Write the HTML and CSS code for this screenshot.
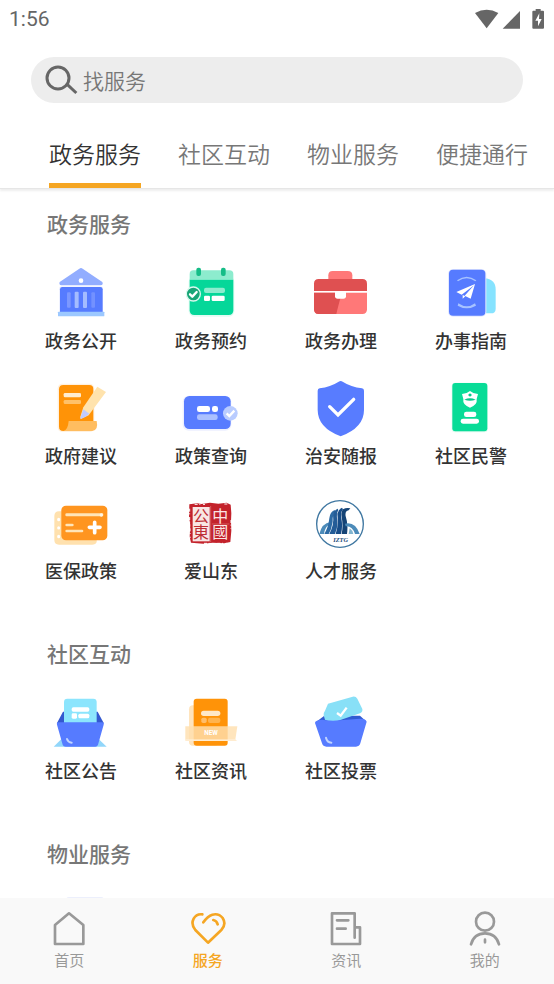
FILE: index.html
```html
<!DOCTYPE html>
<html lang="zh-CN">
<head>
<meta charset="utf-8">
<meta name="viewport" content="width=device-width, initial-scale=1">
<title>政务服务</title>
<link rel="stylesheet" href="styles.css">
</head>
<body>
<div class="app">
  <div class="status">
    <span class="status-time">1:56</span>
    <svg class="status-icons" viewBox="588 18 222 72" aria-hidden="true">
      <path d="M594 36Q629 16 664 36L629 82Z"/>
      <path d="M729 30V83H677Z"/>
      <path fill-rule="evenodd" d="M776 24h15v5h7q3 0 3 3v48q0 3-3 3h-29q-3 0-3-3V32q0-3 3-3h7zM787 37l-12 22h8v17l11-22h-8z"/>
    </svg>
  </div>

  <label class="search">
    <svg class="search-icon" viewBox="132 192 105 96" aria-hidden="true">
      <circle cx="174" cy="234" r="33"/><path d="M199 251L229 279"/>
    </svg>
    <input class="search-input" type="search" placeholder="找服务" aria-label="找服务">
  </label>

  <nav class="tabs">
    <a class="tab tab-active" href="#gov">政务服务</a>
    <a class="tab" href="#community">社区互动</a>
    <a class="tab" href="#property">物业服务</a>
    <a class="tab" href="#access">便捷通行</a>
  </nav>

  <main class="content">
    <section class="group group-first" id="gov">
      <h2 class="group-title">政务服务</h2>
      <div class="grid">
        <a class="item" href="#">
          <svg class="icon" viewBox="27 15 192 192" aria-hidden="true">
            <rect x="57" y="94" width="132" height="86" rx="8" fill="#eef1ff"/>
            <path d="M118 41q5-4 10 0l59 40q4 9-5 10H64q-8-1-5-10z" fill="#92adff"/>
            <circle cx="123" cy="77" r="7" fill="#fff"/>
            <path d="M67 96h114q7 0 7 7v68H60v-68q0-7 7-7z" fill="#567bff"/>
            <rect x="81" y="112" width="11" height="46" rx="3" fill="#7c98ff"/>
            <rect x="104" y="110" width="12" height="49" rx="3" fill="#a4bcff"/>
            <rect x="129" y="110" width="12" height="49" rx="3" fill="#a4bcff"/>
            <rect x="154" y="112" width="11" height="46" rx="3" fill="#7391ff"/>
            <rect x="54" y="170" width="139" height="14" rx="2" fill="#9cc8ff"/>
          </svg>
          <span class="label">政务公开</span>
        </a>
        <a class="item" href="#">
          <svg class="icon" viewBox="417 15 192 192" aria-hidden="true">
            <rect x="446" y="64" width="137" height="121" rx="16" fill="#e2fbf3"/>
            <path d="M449 74V57q0-11 11-11h108q12 0 12 11v17z" fill="#8decce"/>
            <path d="M449 74h131v92q0 14-14 14H463q-14 0-14-14z" fill="#05d799"/>
            <rect x="469" y="38" width="14" height="25" rx="6" fill="#15bd87"/>
            <rect x="543" y="38" width="14" height="25" rx="6" fill="#15bd87"/>
            <rect x="492" y="98" width="63" height="16" rx="6" fill="#8decce"/>
            <rect x="492" y="122" width="18" height="16" rx="4" fill="#fff"/>
            <rect x="515" y="122" width="39" height="16" rx="4" fill="#fff"/>
            <circle cx="460" cy="117" r="21" fill="#19a577" stroke="#dcf9ef" stroke-width="4"/>
            <path d="M450 118l7 7 13-14" fill="none" stroke="#fff" stroke-width="7" stroke-linecap="round" stroke-linejoin="round"/>
          </svg>
          <span class="label">政务预约</span>
        </a>
        <a class="item" href="#">
          <svg class="icon" viewBox="42 15 192 192" aria-hidden="true">
            <path d="M100 74V61q0-13 13-13h45q14 0 14 13v13z" fill="#ff7878"/>
            <path d="M57 108V86q0-14 14-14h131q14 0 14 14v22z" fill="#df5051"/>
            <path d="M57 113h159v50q0 14-14 14H71q-14 0-14-14z" fill="#ff7878"/>
            <path d="M57 113h90l-9 10q-9 32-14 54H71q-14 0-14-14z" fill="#df5051"/>
            <path d="M120 108h33v16q0 7-8 7h-17q-8 0-8-7z" fill="#fff"/>
          </svg>
          <span class="label">政务办理</span>
        </a>
        <a class="item" href="#">
          <svg class="icon" viewBox="432 15 192 192" aria-hidden="true">
            <path d="M568 70q34 2 34 34v57q0 14-14 14h-20z" fill="#86e3ff"/>
            <rect x="459" y="42" width="115" height="143" rx="15" fill="#e4e9ff"/>
            <rect x="462" y="44" width="109" height="138" rx="12" fill="#567bff"/>
            <path d="M486 76q29-22 58 0l-3 3q-26-18-52 0zM490 145q26 18 50 0l3 7q-28 16-55 0z" fill="#a7c3ff"/>
            <path d="M540 87L484 111 500 119 537 91 509 122 527 131ZM503 120v11l8-7z" fill="#fff"/>
          </svg>
          <span class="label">办事指南</span>
        </a>

        <a class="item" href="#">
          <svg class="icon" viewBox="27 15 192 192" aria-hidden="true">
            <rect x="53" y="41" width="110" height="145" rx="14" fill="#fff1df"/>
            <path d="M70 45h78q12 0 12 12v106l-76 20H70q-13 0-13-13V58q0-13 13-13z" fill="#ff9307"/>
            <rect x="71" y="69" width="52" height="13" rx="4" fill="#ffedd0"/>
            <rect x="71" y="90" width="52" height="12" rx="4" fill="#ffc169"/>
            <path d="M172 50l26 16-52 70-24 11-1-7 9-28z" fill="#ffe3ad"/>
            <path d="M130 118l18 13q-7 8-26 16l-1-4z" fill="#c0cbff"/>
            <path d="M86 153h84q6 27-13 30H70q14-3 16-30z" fill="#ffbd60"/>
          </svg>
          <span class="label">政府建议</span>
        </a>
        <a class="item" href="#">
          <svg class="icon" viewBox="417 15 192 192" aria-hidden="true">
            <rect x="428" y="77" width="146" height="105" rx="18" fill="#edf0ff"/>
            <rect x="432" y="78" width="140" height="99" rx="16" fill="#587cff"/>
            <rect x="471" y="108" width="39" height="18" rx="7" fill="#fff"/>
            <rect x="516" y="108" width="18" height="18" rx="7" fill="#fff"/>
            <rect x="471" y="133" width="62" height="17" rx="7" fill="#abc0ff"/>
            <circle cx="571" cy="130" r="22" fill="#b9ccff"/>
            <path d="M560 130l8 8 15-16" fill="none" stroke="#fff" stroke-width="7"/>
          </svg>
          <span class="label">政策查询</span>
        </a>
        <a class="item" href="#">
          <svg class="icon" viewBox="42 15 192 192" aria-hidden="true">
            <path d="M131 35q6-4 12 0 25 16 58 20 6 1 6 7v58q0 53-70 79-69-26-69-79V62q0-6 6-7 32-4 57-20z" fill="#587cff"/>
            <path d="M104 110l25 25 47-47" fill="none" stroke="#fff" stroke-width="10" stroke-linecap="round"/>
          </svg>
          <span class="label">治安随报</span>
        </a>
        <a class="item" href="#">
          <svg class="icon" viewBox="432 15 192 192" aria-hidden="true">
            <rect x="470" y="38" width="108" height="149" rx="10" fill="#dff9ef"/>
            <rect x="472" y="39" width="105" height="145" rx="9" fill="#08dc97"/>
            <path d="M525 63l10 6 14 3-4 15q3 18-20 26-23-8-20-26l-4-15 14-3z" fill="#fff"/>
            <path d="M508 89q17-8 34 0-17 6-34 0z" fill="#08c98b"/>
            <path d="M525 70l6 5-6 5-6-5z" fill="#08c98b"/>
            <rect x="507" y="125" width="37" height="16" rx="7" fill="#fff"/>
            <rect x="497" y="146" width="55" height="15" rx="7" fill="#fff"/>
          </svg>
          <span class="label">社区民警</span>
        </a>

        <a class="item" href="#">
          <svg class="icon" viewBox="27 0 192 192" aria-hidden="true">
            <path d="M57 64h113v92q-3 8-14 8H57q-14 0-14-14V78q0-14 14-14z" fill="#ffe1ae"/>
            <path d="M56 88v1M56 113v1M56 139v1" stroke="#fff" stroke-width="9" stroke-linecap="round"/>
            <rect x="64" y="47" width="138" height="104" rx="14" fill="#ff951f"/>
            <rect x="76" y="70" width="114" height="9" rx="4" fill="#ffe5b8"/>
            <circle cx="184" cy="75" r="5" fill="#fff6e6"/>
            <rect x="76" y="101" width="25" height="8" rx="4" fill="#ffe5b8"/>
            <rect x="76" y="119" width="54" height="8" rx="4" fill="#ffe5b8"/>
            <path d="M164 97v31M148 112h32" stroke="#fff" stroke-width="11" stroke-linecap="round"/>
          </svg>
          <span class="label">医保政策</span>
        </a>
        <a class="item" href="#">
          <svg class="icon" viewBox="417 0 192 192" aria-hidden="true">
            <path d="M448 43l24-3 12 2 26-4 25 3 25-3 12 6 2 26-1 24 1 28-3 34-18 4-35-2-28 3-37-3-4-18 2-35-4-25z" fill="#c3222b"/>
            <path d="M449 56v42M450 115v29M573 90v27M464 43h31M532 160h28M492 160h20M553 42h12" stroke="#fff" stroke-width="3" stroke-dasharray="9 5 3 8"/>
            <rect x="458" y="51" width="51" height="103" fill="#f8e6e4"/>
            <path d="M512 48v109M516 102h52" stroke="#df7776" stroke-width="2"/>
            <text class="seal seal-red" x="483" y="102">公東</text>
            <text class="seal seal-white" x="541" y="102">中國</text>
          </svg>
          <span class="label">爱山东</span>
        </a>
        <a class="item" href="#">
          <svg class="icon" viewBox="42 0 192 192" aria-hidden="true">
            <circle cx="135" cy="102" r="70" fill="#fff" stroke="#3f77a1" stroke-width="4"/>
            <path d="M73 132q8-33 33-36l-4 8q-13 8-15 28z" fill="#4c8bb9"/>
            <path d="M88 132q12-20 15-47 2-20 16-25l2 5q-9 6-8 30-3 22-12 37z" fill="#2d6ba5"/>
            <path d="M103 132q15-28 11-58 3-14 14-18l2 5q-7 9-3 31 1 22-7 40z" fill="#245c97"/>
            <path d="M122 132q9-26 5-61 2-12 14-18l3 5q-9 8-4 33 3 22-2 41z" fill="#184d88"/>
            <path d="M140 132q5-24 0-52-3-15 4-22 10-6 22-3l-5 6q-12 2-9 18 8 22 4 53z" fill="#154476"/>
            <path d="M150 101q31-7 44 31h-14q-8-25-28-23z" fill="#4c8bb9"/>
            <path d="M161 132l3-17q9 6 11 17z" fill="#81b4cf"/>
            <text class="badge-text" x="137" y="157">IZTG</text>
          </svg>
          <span class="label">人才服务</span>
        </a>
      </div>
    </section>

    <section class="group" id="community">
      <h2 class="group-title">社区互动</h2>
      <div class="grid">
        <a class="item" href="#">
          <svg class="icon" viewBox="27 1 192 192" aria-hidden="true">
            <path d="M41 171l24-24h110l25 24z" fill="#91d6fa"/>
            <path d="M51 100l18-34h104l18 34-20 24H72z" fill="#3358cf"/>
            <rect x="72" y="27" width="98" height="96" rx="10" fill="#8ce5fd"/>
            <rect x="95" y="53" width="53" height="13" rx="5" fill="#fff"/>
            <rect x="95" y="71" width="16" height="16" rx="4" fill="#fff"/>
            <rect x="115" y="72" width="33" height="14" rx="5" fill="#fff"/>
            <path d="M56 98h130q7 0 5 7l-17 60q-2 6-8 6H77q-7 0-9-6l-17-60q-2-7 5-7z" fill="#567bff"/>
            <path d="M81 148q3 10 14 11" fill="none" stroke="#c0d4ff" stroke-width="6" stroke-linecap="round"/>
          </svg>
          <span class="label">社区公告</span>
        </a>
        <a class="item" href="#">
          <svg class="icon" viewBox="417 1 192 192" aria-hidden="true">
            <rect x="447" y="47" width="90" height="121" rx="12" fill="#ffe4bd"/>
            <rect x="461" y="27" width="102" height="141" rx="9" fill="#ff9308"/>
            <rect x="483" y="63" width="58" height="16" rx="8" fill="#ffe8c8"/>
            <rect x="484" y="84" width="16" height="16" rx="5" fill="#ffbd69"/>
            <rect x="504" y="84" width="37" height="16" rx="6" fill="#ffb34e"/>
            <path d="M436 110h156l-6 40H436z" fill="#ffdfae" opacity=".82"/>
            <path d="M436 149h150l5 5H436z" fill="#ffecd0"/>
            <text class="new-text" x="513" y="137">NEW</text>
          </svg>
          <span class="label">社区资讯</span>
        </a>
        <a class="item" href="#">
          <svg class="icon" viewBox="42 1 192 192" aria-hidden="true">
            <path d="M64 96l24-18h107l18 17-20 18H82z" fill="#315bd2"/>
            <path d="M99 42l74-21q9-2 14 6l15 31q2 8-7 13L112 99l-22-9-4-13q-2-6 4-14z" fill="#88e0f7"/>
            <path d="M126 70l11 8 18-24" fill="none" stroke="#fff" stroke-width="7"/>
            <path d="M66 93q12-5 27-1l21 1 81-6q17-1 20 9l-19 65q-3 10-13 10H94q-10 0-13-10L60 100q-1-5 6-7z" fill="#567bff"/>
            <path d="M93 144q3 14 16 15" fill="none" stroke="#c0d4ff" stroke-width="6" stroke-linecap="round"/>
          </svg>
          <span class="label">社区投票</span>
        </a>
      </div>
    </section>

    <section class="group" id="property">
      <h2 class="group-title">物业服务</h2>
      <div class="grid">
        <div class="item">
          <svg class="icon" viewBox="0 0 64 64" aria-hidden="true"><rect x="17" y="7" width="38" height="50" rx="3" fill="#eceffc"/></svg>
        </div>
      </div>
    </section>
  </main>

  <nav class="bottom">
    <a class="bottom-item" href="#">
      <svg class="bottom-icon" viewBox="154 93 108 108" aria-hidden="true"><path d="M208 100l43 35v57h-85v-57z"/></svg>
      <span>首页</span>
    </a>
    <a class="bottom-item bottom-active" href="#">
      <svg class="bottom-icon" viewBox="569 93 108 108" aria-hidden="true">
        <path d="M606 103q-18-2-26 13-9 17 5 34l38 38 40-38q16-17 4-36-12-15-31-10-14 4-27 23M639 120q10 2 13 13"/>
      </svg>
      <span>服务</span>
    </a>
    <a class="bottom-item" href="#">
      <svg class="bottom-icon" viewBox="154 93 108 108" aria-hidden="true">
        <path d="M234 173V100h-68v92h84v-50h-13M181 121h34M181 146h26"/>
      </svg>
      <span>资讯</span>
    </a>
    <a class="bottom-item" href="#">
      <svg class="bottom-icon" viewBox="569 93 108 108" aria-hidden="true">
        <circle cx="623" cy="125" r="27"/><path d="M581 193q9-33 42-33t42 33M623 179v8"/>
      </svg>
      <span>我的</span>
    </a>
  </nav>
</div>
</body>
</html>
```

FILE: styles.css
```css
* {
  box-sizing: border-box;
}

body {
  margin: 0;
  background: #fff;
  color: #333;
  font-family: Roboto, "Noto Sans CJK SC", sans-serif;
}

a {
  color: inherit;
  text-decoration: none;
}

.app {
  display: flex;
  flex-direction: column;
  height: 100vh;
}

/* Status bar */
.status {
  display: flex;
  flex: none;
  justify-content: space-between;
  align-items: center;
  height: 38px;
  padding: 0 7px 0 9px;
  color: #666;
}

.status-time {
  font-size: 21px;
  font-weight: 400;
}

.status-icons {
  width: 74px;
  height: 24px;
  fill: #666;
}

/* Search */
.search {
  display: flex;
  flex: none;
  align-items: center;
  height: 46px;
  margin: 19px 31px 0;
  padding: 0 20px 0 13px;
  border-radius: 23px;
  background: #ededed;
}

.search-icon {
  width: 35px;
  height: 32px;
  fill: none;
  stroke: #666;
  stroke-width: 9;
}

.search-input {
  flex: 1;
  min-width: 0;
  padding: 0 4px;
  border: 0;
  outline: 0;
  background: none;
  color: #333;
  font: 350 21px/28px "Noto Sans CJK SC", sans-serif;
}

.search-input::placeholder {
  color: #777;
  opacity: 1;
}

/* Category tabs */
.tabs {
  display: flex;
  flex: none;
  gap: 37px;
  height: 86px;
  padding: 25px 0 0 49px;
  overflow: hidden;
  border-bottom: 1px solid #e6e6e6;
  box-shadow: 0 2px 2px #eee;
  color: #777;
  font-size: 23px;
  font-weight: 350;
  line-height: 56px;
  white-space: nowrap;
}

.tab {
  flex: none;
  border-bottom: 5px solid transparent;
}

.tab-active {
  border-color: #f5a623;
  color: #333;
}

/* Service groups */
.content {
  flex: 1;
  min-height: 0;
  overflow-y: auto;
  scrollbar-width: none;
}

.group {
  padding: 0 18px 52px 16px;
}

.group-first {
  padding-top: 20px;
}

.group-title {
  margin: 0 0 19px 31px;
  color: #777;
  font-size: 21px;
  font-weight: 500;
  line-height: 32px;
}

.grid {
  display: grid;
  grid-template-columns: repeat(4, 1fr);
  row-gap: 18px;
}

.item {
  display: flex;
  flex-direction: column;
  align-items: center;
  gap: 3px;
}

.icon {
  width: 64px;
  height: 64px;
}

.label {
  font-size: 18px;
  font-weight: 500;
  line-height: 30px;
}

.seal {
  font: 400 48px "Noto Sans CJK TC", sans-serif;
  text-anchor: middle;
  writing-mode: vertical-rl;
}

.seal-red {
  fill: #bd2d34;
}

.seal-white {
  fill: #fbe6e5;
}

.badge-text {
  fill: #174878;
  font: italic 700 19px "Liberation Serif", serif;
  text-anchor: middle;
}

.new-text {
  fill: #fff;
  font: 700 19px Roboto, sans-serif;
  text-anchor: middle;
}

/* Bottom navigation */
.bottom {
  display: grid;
  flex: none;
  grid-template-columns: repeat(4, 1fr);
  height: 86px;
  padding-top: 13px;
  background: #f9f9f9;
  color: #999;
  font-size: 15px;
  line-height: 28px;
}

.bottom-item {
  display: flex;
  flex-direction: column;
  align-items: center;
}

.bottom-icon {
  width: 36px;
  height: 36px;
  fill: none;
  stroke: currentColor;
  stroke-width: 8;
  stroke-linecap: round;
  stroke-linejoin: round;
}

.bottom-active {
  color: #f5a623;
  font-weight: 500;
}
```
